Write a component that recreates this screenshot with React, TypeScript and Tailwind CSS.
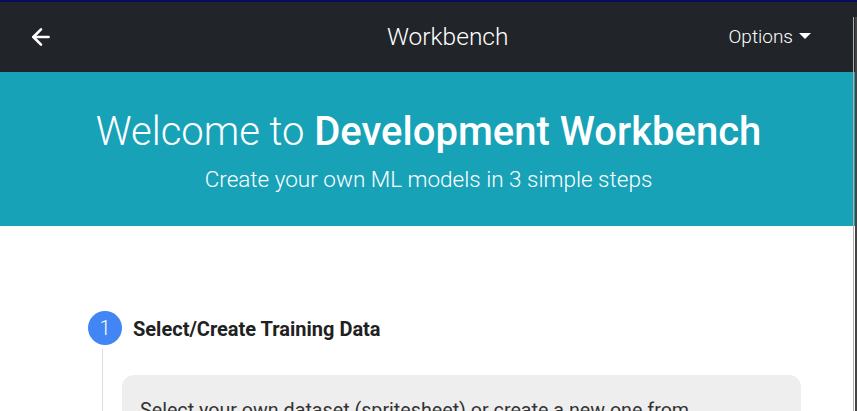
import { ArrowLeft } from 'lucide-react'

const font = { fontFamily: 'Roboto, "Liberation Sans", sans-serif' }

function Navbar() {
  return (
    <nav className="flex items-center h-[70px] bg-[#212529] text-white">
      <div className="w-[167px] pl-[28px] flex items-center">
        <ArrowLeft size={26} strokeWidth={2.4} />
      </div>
      <div className="flex-1 text-center text-[24.5px] font-light">Workbench</div>
      <div className="pr-[46px] flex items-center gap-[6px] text-[19px] font-light">
        Options
        <span className="inline-block w-0 h-0 border-l-[6px] border-r-[6px] border-t-[6px] border-l-transparent border-r-transparent border-t-white mb-[2px]" />
      </div>
    </nav>
  )
}

function Hero() {
  return (
    <header className="h-[154px] bg-[#17a2b8] text-white flex flex-col items-center pt-[36px]">
      <h1 className="text-[40px] leading-[48px] font-light">
        Welcome to <span className="font-medium">Development Workbench</span>
      </h1>
      <p className="text-[22.5px] leading-[28px] font-light mt-[9px]">Create your own ML models in 3 simple steps</p>
    </header>
  )
}

function Step() {
  return (
    <section className="pl-[88px] pr-[56px] pt-[85px]">
      <div className="flex items-center gap-[11px]">
        <div className="w-[34px] h-[34px] rounded-full bg-[#4285f4] text-white flex items-center justify-center text-[20px] font-light">
          1
        </div>
        <h2 className="text-[20px] font-bold text-[#212121] mt-[2px]">Select/Create Training Data</h2>
      </div>
      <div className="flex">
        <div className="w-[34px] flex justify-center pr-[5px]">
          <div className="w-px bg-[#dddddd] h-[80px] mt-[4px]" />
        </div>
        <div className="flex-1 mt-[30px] rounded-[12px] bg-[#eeeeee] pl-[18px] pr-[100px] pt-[21px] pb-[20px] text-[19.7px] text-[#333333] font-normal">
          Select your own dataset (spritesheet) or create a new one from scratch using the built-in tools.
        </div>
      </div>
    </section>
  )
}

export default function App() {
  return (
    <div className="relative h-[411px] overflow-hidden bg-white border-t-2 border-[#0b0b5c]" style={font}>
      <Navbar />
      <Hero />
      <Step />
      <div className="absolute right-0 top-[15px] bottom-0 w-[4px] border-l border-[#b0b0b0] border-r-2 border-r-[#444444]" />
    </div>
  )
}
